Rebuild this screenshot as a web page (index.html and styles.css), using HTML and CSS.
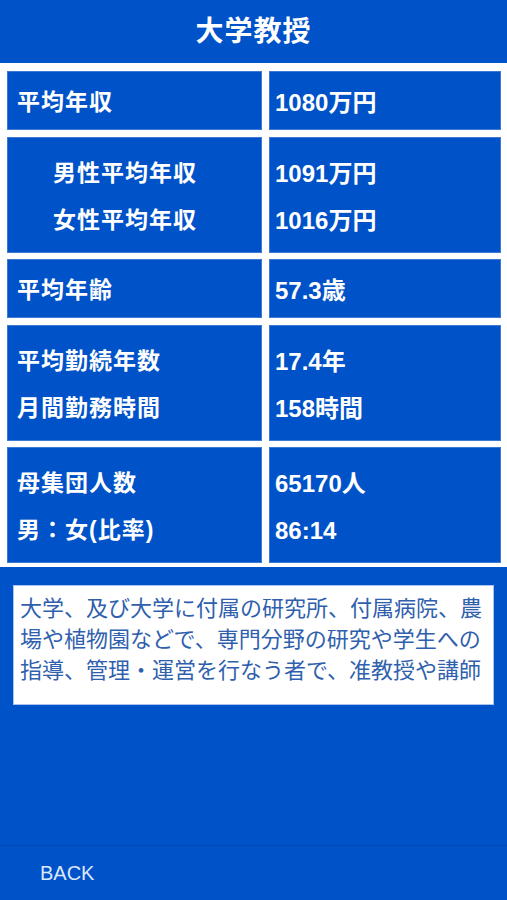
FILE: index.html
```html
<!DOCTYPE html>
<html lang="ja">
<head>
<meta charset="utf-8">
<title>大学教授</title>
<link rel="stylesheet" href="styles.css">
</head>
<body>
<div class="page">
  <header class="title-bar"><h1 class="title">大学教授</h1></header>
  <section class="stats">
    <div class="row single">
      <div class="cell label"><span>平均年収</span></div>
      <div class="cell value"><span>1080万円</span></div>
    </div>
    <div class="row double">
      <div class="cell label indent"><span>男性平均年収</span><span>女性平均年収</span></div>
      <div class="cell value"><span>1091万円</span><span>1016万円</span></div>
    </div>
    <div class="row single">
      <div class="cell label"><span>平均年齢</span></div>
      <div class="cell value"><span>57.3歳</span></div>
    </div>
    <div class="row double">
      <div class="cell label"><span>平均勤続年数</span><span>月間勤務時間</span></div>
      <div class="cell value"><span>17.4年</span><span>158時間</span></div>
    </div>
    <div class="row double">
      <div class="cell label"><span>母集団人数</span><span>男：女(比率)</span></div>
      <div class="cell value"><span>65170人</span><span>86:14</span></div>
    </div>
  </section>
  <section class="desc-area">
    <p class="desc">大学、及び大学に付属の研究所、付属病院、農<br>場や植物園などで、専門分野の研究や学生への<br>指導、管理・運営を行なう者で、准教授や講師</p>
  </section>
  <footer class="bottom-bar"><span class="back">BACK</span></footer>
</div>
</body>
</html>
```

FILE: styles.css
```css
html, body {
  margin: 0;
  padding: 0;
}
body {
  background: #0052c9;
  font-family: "Liberation Sans", "Noto Sans CJK JP", sans-serif;
  color: #ffffff;
}
.page {
  width: 507px;
  height: 900px;
  display: flex;
  flex-direction: column;
}
.title-bar {
  height: 63px;
  display: flex;
  align-items: center;
  justify-content: center;
  background: #0052c9;
}
.title {
  margin: 0;
  font-size: 28px;
  font-weight: bold;
  line-height: 1;
  letter-spacing: 1px;
}
.stats {
  background: #ffffff;
  padding: 8px 6px 4px 7px;
  display: flex;
  flex-direction: column;
  gap: 6.5px;
}
.row {
  display: grid;
  grid-template-columns: 255px 232px;
  column-gap: 7px;
}
.row.single { height: 59px; }
.row.double { height: 116px; }
.cell {
  background: #0052c9;
  border: 1px solid #3d7ad6;
  display: flex;
  flex-direction: column;
  justify-content: center;
  font-size: 23px;
  font-weight: bold;
  line-height: 47px;
  padding-top: 4px;
}
.label {
  padding-left: 9px;
  letter-spacing: 1px;
}
.label.indent {
  padding-left: 45px;
}
.value {
  padding-left: 5px;
  font-size: 24px;
}
.desc-area {
  flex: 1;
  padding: 18px 13px 0 13px;
}
.desc {
  margin: 0;
  background: #ffffff;
  border: 1px solid #a9c4ec;
  color: #2f60ad;
  font-size: 22px;
  line-height: 31px;
  padding: 7px 6px 18px 6px;
  white-space: nowrap;
}
.bottom-bar {
  height: 54px;
  border-top: 1px solid #0046b4;
  display: flex;
  align-items: center;
  padding-left: 40px;
}
.back {
  font-size: 20px;
  color: #dce8fb;
}
```
